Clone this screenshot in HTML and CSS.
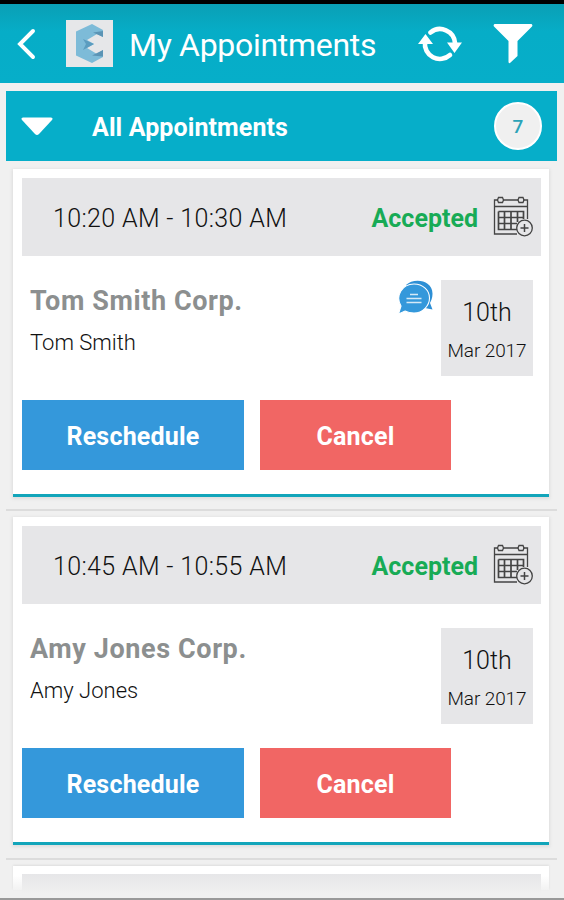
FILE: index.html
```html
<!DOCTYPE html>
<html lang="en">
<head>
    <meta charset="UTF-8">
    <meta name="viewport" content="width=device-width, initial-scale=1.0">
    <title>My Appointments</title>
    <link rel="stylesheet" href="styles.css">
</head>
<body>
    <!-- shared icons -->
    <svg class="sprite" width="0" height="0">
        <symbol id="calendar" viewBox="0 0 40 42">
            <g fill="none" stroke="#444" stroke-width="1.300">
                <path d="M24 38H1.500V4H5M10 4H25M30 4H34.500V23"/>
                <path d="M1.500 10.500H34.500" stroke-width="1.500"/>
                <path d="M5.500 1.500H9.500L10.500 4L9.500 6.500H5.500L4.500 4ZM26 1.500H30L31 4L30 6.500H26L25 4Z"/>
                <path d="M5.500 15.500H30.500V23M5.500 15.500V33.500H24M5.500 21.500H30M5.500 27.500H24M11.500 15.500V33.500M18 15.500V33.500M24.500 15.500V26" stroke-width="1.700"/>
                <circle cx="31.500" cy="32" r="7.800" fill="#e6e6e8"/>
                <path d="M27.500 32H35.500M31.500 28V36" stroke-width="1.500"/>
            </g>
        </symbol>
    </svg>

    <div class="status-bar"></div>
    <header class="header">
        <svg class="back" width="20" height="32" viewBox="0 0 20 32"><path d="M16 3L3 16L16 29" fill="none" stroke="#fff" stroke-width="3.900" stroke-linecap="round"/></svg>
        <svg class="logo" width="47" height="47" viewBox="0 0 47 47">
            <rect width="47" height="47" fill="#e6e7e9"/>
            <path d="M10 11.500L26 4L37 10V17L31 14L21 20L28 24L21 28L31 34L37 30V37L26 43L10 35.500Z" fill="#7dbbd8"/>
            <path d="M17 19L28 24L17 30L20 24Z" fill="#5b9cbf"/>
            <path d="M27 12.500L37 11V17ZM26 35.500L37 30V36.500Z" fill="#5b94b5"/>
        </svg>
        <h1 class="title">My Appointments</h1>
        <svg class="refresh" width="44" height="38" viewBox="0 0 44 38">
            <g fill="none" stroke="#fff" stroke-width="4.600">
                <path d="M12.500 7.500A15 15 0 0 1 37 18" stroke-linecap="round"/>
                <path d="M32 30A15 15 0 0 1 7 17" stroke-linecap="round"/>
            </g>
            <path d="M0 19L7.500 9L15 19ZM29 17.500H44L36.500 28Z" fill="#fff"/>
        </svg>
        <svg class="filter" width="40" height="41" viewBox="0 0 40 41"><path d="M1.500 1H38.500Q40 2 39 3.500L24.500 18V33L17 40Q15.500 40.500 15.500 39V18L1 3.500Q0 2 1.500 1Z" fill="#fff"/></svg>
    </header>

    <main class="content">
        <div class="section-bar">
            <svg class="arrow" width="32" height="19" viewBox="0 0 32 19"><path d="M2 0.500H30Q32.500 1 31 3L18 17Q16 19 14 17L1 3Q-0.500 1 2 0.500Z" fill="#fff"/></svg>
            <h2 class="section-title">All Appointments</h2>
            <span class="count">7</span>
        </div>

        <div class="item">
            <div class="card">
                <div class="card-head">
                    <span class="time">10:20 AM - 10:30 AM</span>
                    <span class="status">Accepted</span>
                    <svg class="calendar" width="40" height="42"><use href="#calendar"/></svg>
                </div>
                <div class="card-body">
                    <div class="client">
                        <div class="company">Tom Smith Corp.</div>
                        <div class="person">Tom Smith</div>
                    </div>
                    <svg class="chat" width="36" height="36" viewBox="0 0 36 36">
                        <path d="M8 5C16-3 35 0 34.500 14C34.500 18 33 21 32 23L34.500 29.500L27 28C21 30 14 28 12 25Z" fill="#2d8fd5"/>
                        <path d="M16 4C25 4 31.500 10.500 31.500 18S25 33 16 33C12 33 9 32 7 31L0.500 34L3 26C-3 16 4 4 16 4Z" fill="#3498db" stroke="#fff" stroke-width="1.100"/>
                        <path d="M12 14.500H20M8.500 18.500H23.500M8.500 22.500H23.500" stroke="#d5e9f7" stroke-width="1.600"/>
                    </svg>
                    <div class="date">
                        <div class="day">10th</div>
                        <div class="month">Mar 2017</div>
                    </div>
                </div>
                <div class="actions">
                    <button class="btn reschedule">Reschedule</button>
                    <button class="btn cancel">Cancel</button>
                </div>
            </div>
        </div>

        <div class="item">
            <div class="card">
                <div class="card-head">
                    <span class="time">10:45 AM - 10:55 AM</span>
                    <span class="status">Accepted</span>
                    <svg class="calendar" width="40" height="42"><use href="#calendar"/></svg>
                </div>
                <div class="card-body">
                    <div class="client">
                        <div class="company">Amy Jones Corp.</div>
                        <div class="person">Amy Jones</div>
                    </div>
                    <div class="date">
                        <div class="day">10th</div>
                        <div class="month">Mar 2017</div>
                    </div>
                </div>
                <div class="actions">
                    <button class="btn reschedule">Reschedule</button>
                    <button class="btn cancel">Cancel</button>
                </div>
            </div>
        </div>

        <!-- next card fading out at the bottom -->
        <div class="next-card">
            <div class="next-head"></div>
        </div>
    </main>
    <div class="bottom-line"></div>
</body>
</html>
```
FILE: styles.css
```css
* {
    box-sizing: border-box;
}
body {
    margin: 0;
    height: 900px;
    overflow: hidden;
    display: flex;
    flex-direction: column;
    background: #f0f0f0;
    font-family: Roboto, sans-serif;
    color: #111;
}
h1, h2 {
    margin: 0;
}
.sprite {
    display: none;
}
.status-bar {
    height: 4px;
    background: #000;
    flex-shrink: 0;
}
.header {
    height: 79px;
    flex-shrink: 0;
    display: flex;
    align-items: center;
    padding: 0 31px 0 17px;
    background: linear-gradient(#0a9fb5, #06adc7 35%, #06aec9);
}
.logo {
    margin-left: 29px;
}
.title {
    margin-left: 16px;
    padding-top: 2px;
    font-size: 32px;
    font-weight: 400;
    letter-spacing: -0.3px;
    color: #fff;
    white-space: nowrap;
}
.refresh {
    margin-left: auto;
}
.filter {
    margin-left: 31px;
}
.content {
    flex: 1;
    min-height: 0;
    overflow: hidden;
    padding: 8px 7px 0 6px;
}
.section-bar {
    height: 70px;
    display: flex;
    align-items: center;
    padding: 0 15px;
    background: #06aec9;
}
.section-title {
    margin-left: 39px;
    padding-top: 2px;
    font-size: 25px;
    font-weight: 700;
    letter-spacing: 0.1px;
    color: #fff;
}
.count {
    width: 48px;
    height: 48px;
    margin-left: auto;
    border: 2px solid #fff;
    border-radius: 50%;
    background: #f0f0f0;
    color: #2ba3b8;
    font-size: 19px;
    font-weight: 500;
    line-height: 46px;
    text-align: center;
}
.item {
    height: 349px;
    padding: 6px 8px 0 7px;
    border-bottom: 2px solid #dcdcdc;
}
.section-bar + .item {
    height: 350px;
    padding-top: 8px;
}
.card {
    height: 328px;
    padding: 9px 8px 0 9px;
    background: #fff;
    border-bottom: 3px solid #12a5ba;
    box-shadow: 0 1px 3px 1px #dedede;
}
.card-head {
    height: 78px;
    display: flex;
    align-items: center;
    padding: 0 8px 0 31px;
    background: #e6e6e8;
}
.time {
    padding-top: 2px;
    font-size: 25px;
    letter-spacing: 0.35px;
}
.status {
    margin-left: auto;
    margin-right: 15px;
    padding-top: 2px;
    font-size: 25px;
    font-weight: 700;
    color: #18ab56;
}
.card-body {
    height: 144px;
    display: flex;
    padding: 24px 8px 0 8px;
}
.client {
    flex: 1;
}
.company {
    margin-top: 5px;
    font-size: 27px;
    line-height: 32px;
    font-weight: 700;
    letter-spacing: 0.6px;
    color: #8c8f8f;
}
.person {
    margin-top: 13px;
    font-size: 22px;
    line-height: 26px;
}
.chat {
    margin-right: 7px;
}
.date {
    width: 92px;
    height: 96px;
    padding-top: 17px;
    background: #e6e6e8;
    text-align: center;
}
.day {
    font-size: 25px;
    line-height: 32px;
}
.month {
    font-size: 19px;
    line-height: 44px;
    letter-spacing: -0.1px;
    white-space: nowrap;
}
.time, .person, .day, .month {
    font-weight: 300;
}
.actions {
    display: flex;
    gap: 16px;
}
.btn {
    height: 70px;
    border: none;
    padding: 3px 0 0;
    font-family: inherit;
    font-size: 25px;
    font-weight: 700;
    letter-spacing: 0.2px;
    color: #fff;
}
.reschedule {
    width: 222px;
    background: #3498db;
}
.cancel {
    width: 191px;
    background: #f16664;
}
.next-card {
    height: 24px;
    margin: 6px 8px 0 7px;
    padding: 8px 8px 0 9px;
    background: linear-gradient(#fff 40%, #f2f2f2);
    box-shadow: 0 -1px 2px #dedede;
}
.next-head {
    height: 20px;
    background: linear-gradient(#e6e6e8, #f0f0f0);
}
.bottom-line {
    height: 2px;
    flex-shrink: 0;
    background: #999;
}
```
